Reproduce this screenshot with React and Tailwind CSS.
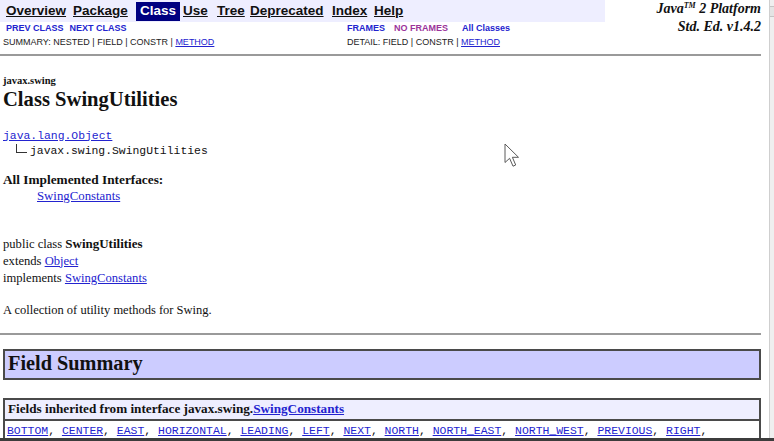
import React from "react";

const serif = { fontFamily: '"Liberation Serif", "Times New Roman", serif' };
const sans = { fontFamily: '"Liberation Sans", Arial, sans-serif' };
const mono = { fontFamily: '"Liberation Mono", "Courier New", monospace' };

const L = ({ children, className = "" }) => (
  <a className={"text-[#2323cf] underline " + className}>{children}</a>
);

const fields = [
  "BOTTOM",
  "CENTER",
  "EAST",
  "HORIZONTAL",
  "LEADING",
  "LEFT",
  "NEXT",
  "NORTH",
  "NORTH_EAST",
  "NORTH_WEST",
  "PREVIOUS",
  "RIGHT",
];

export default function App() {
  return (
    <div className="w-[774px] h-[441px] overflow-hidden bg-white flex flex-col relative text-[#111]" style={serif}>
      <div className="flex h-[438px] overflow-hidden">
        <div className="w-[769px] pr-[8px] shrink-0">
          {/* Header */}
          <div className="flex">
            <div className="w-[605px] shrink-0">
              <div className="h-[22px] bg-[#eeeeff] flex items-center text-[13.5px] font-bold text-[#111]" style={sans}>
                <a className="ml-[6px] w-[67px] underline">Overview</a>
                <a className="w-[63px] underline">Package</a>
                <span className="w-[44px] h-[19px] bg-[#000080] text-white flex items-center justify-center">Class</span>
                <a className="ml-[3px] w-[34px] underline">Use</a>
                <a className="w-[33px] underline">Tree</a>
                <a className="w-[82px] underline">Deprecated</a>
                <a className="w-[42px] underline">Index</a>
                <a className="underline">Help</a>
              </div>
              <div className="h-[14px] flex items-center text-[9px] font-bold" style={sans}>
                <div className="w-[347px] flex">
                  <a className="ml-[6px] text-[#2323cf]">PREV CLASS</a>
                  <a className="ml-[6px] text-[#2323cf]">NEXT CLASS</a>
                </div>
                <a className="text-[#2323cf]">FRAMES</a>
                <a className="ml-[9px] text-[#9b339b]">NO FRAMES</a>
                <a className="ml-[14px] text-[#2323cf]">All Classes</a>
              </div>
              <div className="h-[13px] flex items-center text-[9px] text-[#222]" style={sans}>
                <div className="w-[347px] pl-[3px]">
                  SUMMARY: NESTED | FIELD | CONSTR | <L>METHOD</L>
                </div>
                <div>
                  DETAIL: FIELD | CONSTR | <L>METHOD</L>
                </div>
              </div>
            </div>
            <div className="flex-1 text-right font-bold italic text-[14px] leading-[16px] pt-[1px] text-[#111]">
              Java<span className="text-[8px] relative top-[-5px]">TM</span> 2 Platform
              <br />
              Std. Ed. v1.4.2
            </div>
          </div>

          <div className="mt-[5px] h-[2px] bg-[#9a9a9a]" />

          <div className="pl-[3px]">
            <div className="mt-[19px] h-[12px] leading-[12px] text-[10.5px] font-bold">javax.swing</div>
            <div className="h-[24px] leading-[24px] text-[20.6px] font-bold">Class SwingUtilities</div>

            <div className="mt-[17.5px] text-[11.4px] leading-[15px]" style={mono}>
              <L>java.lang.Object</L>
              <div className="flex h-[15px]">
                <span className="ml-[13px] w-[11px] h-[9px] border-l-[1.5px] border-b-[1.5px] border-[#333]" />
                <span className="ml-[3px]">javax.swing.SwingUtilities</span>
              </div>
            </div>

            <div className="mt-[13px] leading-[16px]">
              <div className="font-bold text-[13.3px]">All Implemented Interfaces:</div>
              <div className="ml-[34px] text-[12.8px]">
                <L>SwingConstants</L>
              </div>
            </div>

            <div className="mt-[31px] text-[12.6px] leading-[17px]">
              <div>
                public class <b className="text-[13px]">SwingUtilities</b>
              </div>
              <div>
                extends <L>Object</L>
              </div>
              <div>
                implements <L>SwingConstants</L>
              </div>
            </div>

            <div className="mt-[15.5px] text-[12.5px] leading-[17px]">A collection of utility methods for Swing.</div>
          </div>

          <div className="mt-[13.5px] h-[2px] bg-[#9a9a9a]" />

          <div className="ml-[3px] mt-[14px] border-2 border-[#4a4a4a] bg-[#ccccff] h-[31px] pl-[3px] text-[20.3px] leading-[25px] font-bold">
            Field Summary
          </div>

          <div className="ml-[3px] mt-[18.5px] border-2 border-[#4a4a4a]">
            <div className="h-[19px] bg-[#eeeeff] pl-[3px] text-[13.2px] leading-[18px] font-bold">
              Fields inherited from interface javax.swing.<L>SwingConstants</L>
            </div>
            <div className="border-t-2 border-[#4a4a4a] h-[24px] pl-[2px] text-[11.45px] leading-[20px] whitespace-nowrap" style={mono}>
              {fields.map((f) => (
                <React.Fragment key={f}>
                  <L>{f}</L>
                  {", "}
                </React.Fragment>
              ))}
            </div>
          </div>
        </div>
        <div className="w-[5px] bg-[#efefef] border-l border-[#cfcfcf] flex flex-col">
          <div className="mt-[6px] h-[11px] border-t border-b border-[#c4c4c4] bg-[#e4e4e4]" />
        </div>
      </div>
      <div className="h-[3px] bg-[#3c3c3c]" />

      <svg className="absolute left-[504px] top-[143px]" width="16" height="25" viewBox="0 0 16 25">
        <path
          d="M1 1 L1 19.5 L5.6 15.3 L9 23.2 L11.7 22 L8.4 14.3 L14.5 14.3 Z"
          fill="#ffffff"
          stroke="#5a5a5a"
          strokeWidth="1"
          strokeLinejoin="miter"
        />
      </svg>
    </div>
  );
}
